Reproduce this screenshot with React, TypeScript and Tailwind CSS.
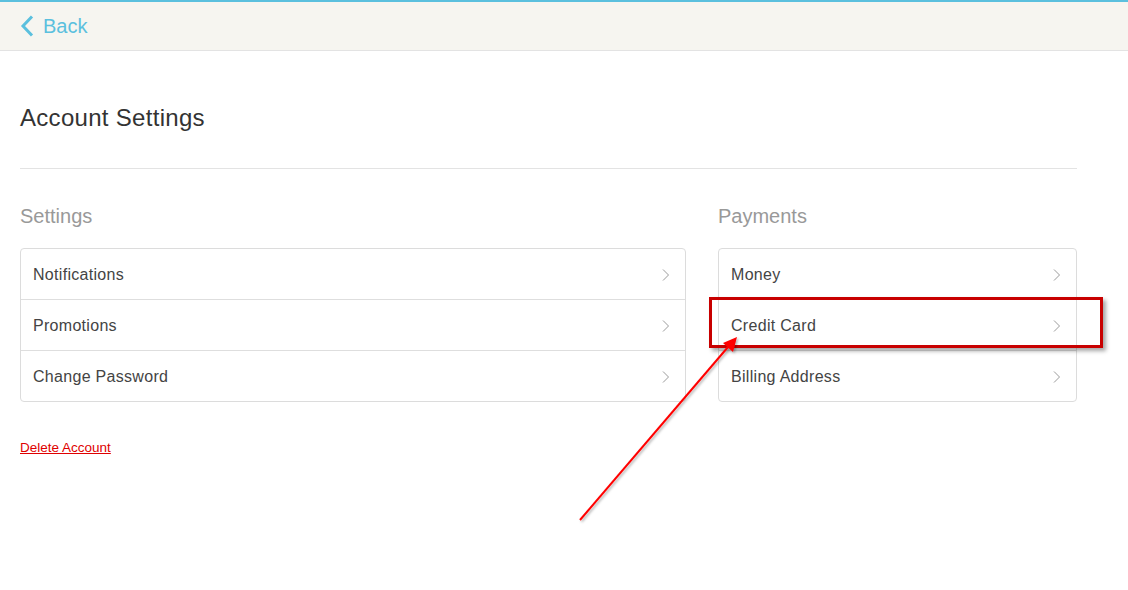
import React from "react";

const font = { fontFamily: '"Liberation Sans", Arial, Helvetica, sans-serif' };

function Chevron() {
  return (
    <svg width="8" height="12" viewBox="0 0 8 12" className="shrink-0">
      <path d="M1 0.5 L6.5 6 L1 11.5" fill="none" stroke="#9a9a9a" strokeWidth="1" />
    </svg>
  );
}

function Row({ label, last }: { label: string; last?: boolean }) {
  return (
    <div
      className={`flex items-center justify-between pl-3 pr-[15px] pt-[16px] pb-[14px] ${
        last ? "" : "border-b border-[#dedede]"
      }`}
    >
      <span className="text-[16px] leading-5 tracking-[0.3px] text-[#444]">{label}</span>
      <Chevron />
    </div>
  );
}

function Panel({ items }: { items: string[] }) {
  return (
    <div className="border border-[#dcdcdc] rounded-[4px] bg-white">
      {items.map((it, i) => (
        <Row key={it} label={it} last={i === items.length - 1} />
      ))}
    </div>
  );
}

export default function App() {
  return (
    <div className="relative w-[1128px] h-[590px] bg-white overflow-hidden" style={font}>
      <header className="h-[51px] border-t-2 border-[#5bc0de] border-b border-b-[#e3e3e3] bg-[#f6f5f0] flex items-center pl-[20px]">
        <svg width="14" height="22" viewBox="0 0 14 22" className="mr-[9px] mt-[-1px]">
          <path d="M12 1.5 L3 11 L12 20.5" fill="none" stroke="#5bc0de" strokeWidth="3" />
        </svg>
        <span className="text-[20px] leading-5 text-[#5bc0de]">Back</span>
      </header>

      <main className="pl-[20px] w-[1077px]">
        <h1 className="mt-[55px] text-[24px] leading-[24px] tracking-[0.3px] text-[#333]">
          Account Settings
        </h1>
        <div className="mt-[38px] h-px bg-[#e3e3e3]" />

        <div className="flex gap-[32px] mt-[37px]">
          <section className="w-[666px]">
            <h2 className="text-[20px] leading-5 text-[#999]">Settings</h2>
            <div className="mt-[22px]">
              <Panel items={["Notifications", "Promotions", "Change Password"]} />
            </div>
            <a className="block mt-[39px] text-[13.5px] leading-[13px] text-[#e00000] underline" href="#">
              Delete Account
            </a>
          </section>
          <section className="w-[359px]">
            <h2 className="text-[20px] leading-5 text-[#999]">Payments</h2>
            <div className="mt-[22px]">
              <Panel items={["Money", "Credit Card", "Billing Address"]} />
            </div>
          </section>
        </div>
      </main>

      {/* annotation box */}
      <div className="absolute left-[709px] top-[297px] w-[394px] h-[51px] border-[3px] border-[#c80000] shadow-[3px_3px_4px_rgba(0,0,0,0.35)]" />

      {/* annotation arrow */}
      <svg className="absolute left-0 top-0 pointer-events-none" width="1128" height="590">
        <defs>
          <filter id="sh" x="-10%" y="-10%" width="120%" height="120%">
            <feDropShadow dx="1.5" dy="1.5" stdDeviation="1" floodColor="#000" floodOpacity="0.3" />
          </filter>
        </defs>
        <g filter="url(#sh)">
          <line x1="580" y1="520" x2="728" y2="347" stroke="#ff0000" strokeWidth="2" />
          <polygon points="737,337 733,352 723,343" fill="#ff0000" />
        </g>
      </svg>
    </div>
  );
}
